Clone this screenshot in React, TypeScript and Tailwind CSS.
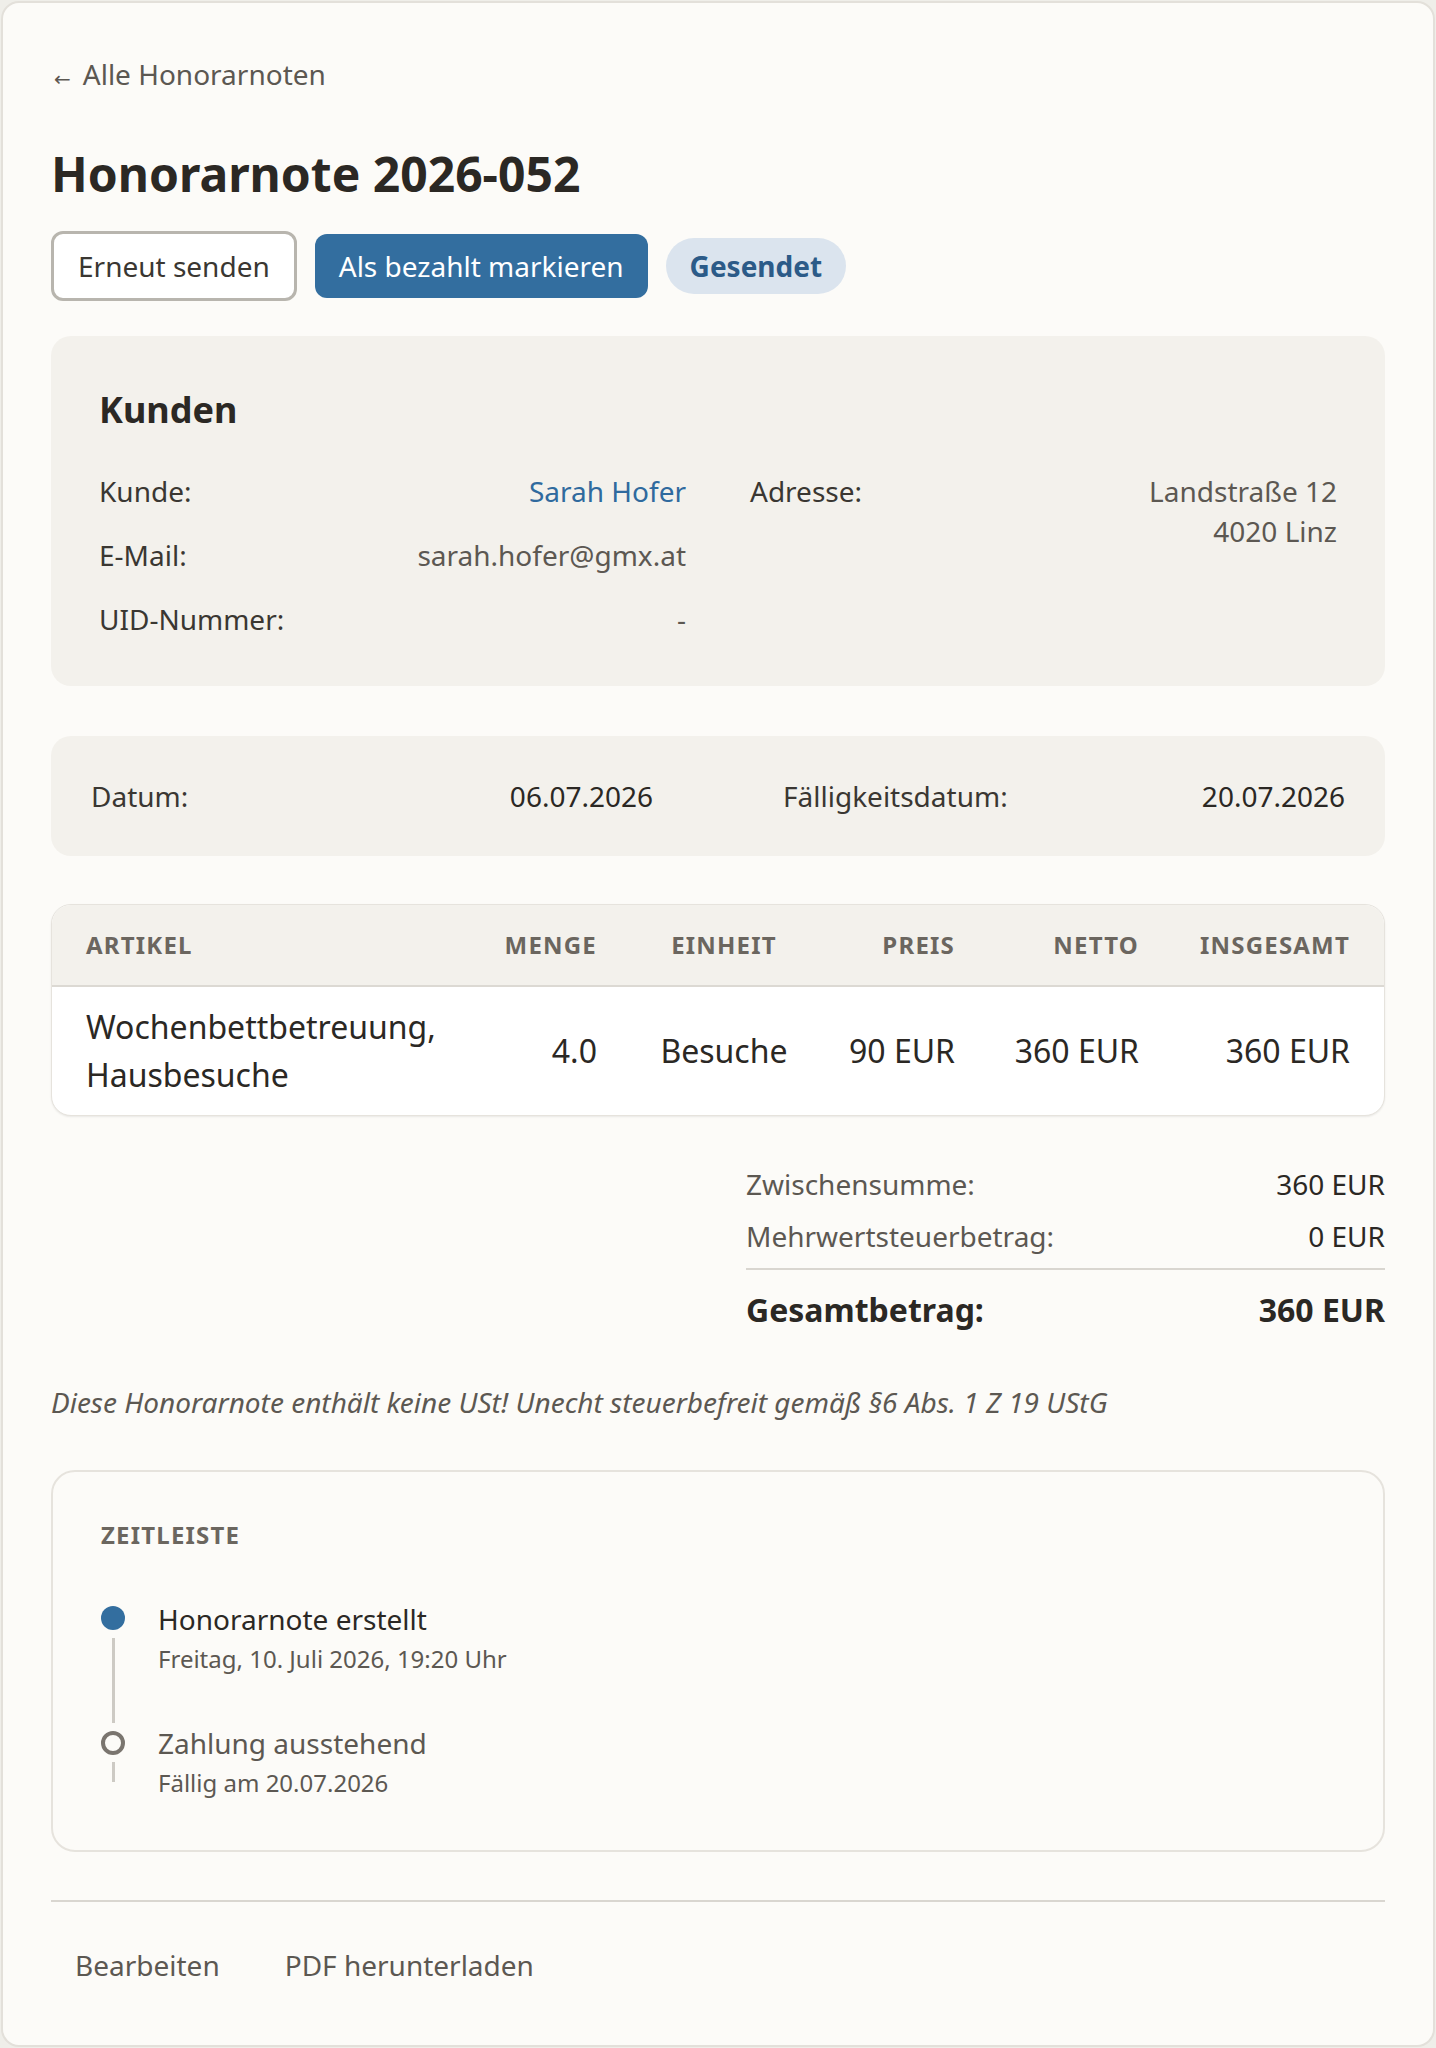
const rowLabel = "text-[#3a3732]";
const rowValue = "text-[#5c5852]";

function InfoRow({ label, children }: { label: string; children: React.ReactNode }) {
  return (
    <div className="flex justify-between">
      <span className={rowLabel}>{label}</span>
      <span className="text-right">{children}</span>
    </div>
  );
}

const headCell = "text-[24px] font-bold uppercase tracking-[0.05em] text-[#6b665f] leading-[30px]";

function ItemsTable() {
  return (
    <div className="overflow-hidden rounded-[20px] border border-[#e6e3dd] bg-white shadow-[0_1px_2px_rgba(0,0,0,0.08)]">
      <div className="grid h-[82px] grid-cols-[419px_160px_186px_172px_184px_1fr] items-center border-b-2 border-[#dcd9d3] bg-[#f3f1ec]">
        <span className={`${headCell} pl-[34px]`}>Artikel</span>
        <span className={`${headCell} pr-[34px] text-right`}>Menge</span>
        <span className={`${headCell} text-center`}>Einheit</span>
        <span className={`${headCell} pr-[34px] text-right`}>Preis</span>
        <span className={`${headCell} pr-[34px] text-right`}>Netto</span>
        <span className={`${headCell} pr-[34px] text-right`}>Insgesamt</span>
      </div>
      <div className="grid grid-cols-[419px_160px_186px_172px_184px_1fr] items-center py-[16px] text-[32px] leading-[48px] text-[#2b2824]">
        <span className="pl-[34px]">Wochenbettbetreuung, Hausbesuche</span>
        <span className="pr-[34px] text-right">4.0</span>
        <span className="text-center">Besuche</span>
        <span className="pr-[34px] text-right">90 EUR</span>
        <span className="pr-[34px] text-right">360 EUR</span>
        <span className="pr-[34px] text-right">360 EUR</span>
      </div>
    </div>
  );
}

function Timeline() {
  return (
    <section className="rounded-[24px] border-2 border-[#e6e3dd] bg-[#fcfbf8] px-[48px] pb-[47px] pt-[49px]">
      <h3 className="text-[24px] font-bold uppercase leading-[28px] tracking-[0.05em] text-[#6b665f]">Zeitleiste</h3>
      <div className="mt-[50px] flex flex-col">
        <div className="flex gap-[33px]">
          <div className="flex w-[24px] flex-col items-center">
            <span className="mt-[7px] h-[24px] w-[24px] rounded-full bg-[#336e9f]" />
            <span className="mt-[8px] w-[3px] flex-1 bg-[#cdcac4]" />
          </div>
          <div className="pb-[44px]">
            <p className="text-[28px] leading-[40px] text-[#2b2824]">Honorarnote erstellt</p>
            <p className="text-[24px] leading-[40px] text-[#5c5852]">Freitag, 10. Juli 2026, 19:20 Uhr</p>
          </div>
        </div>
        <div className="flex gap-[33px]">
          <div className="flex w-[24px] flex-col items-center">
            <span className="mt-[8px] h-[24px] w-[24px] rounded-full border-4 border-[#7a756f]" />
            <span className="mt-[7px] h-[20px] w-[3px] bg-[#cdcac4]" />
          </div>
          <div>
            <p className="text-[28px] leading-[40px] text-[#5c5852]">Zahlung ausstehend</p>
            <p className="text-[24px] leading-[40px] text-[#5c5852]">Fällig am 20.07.2026</p>
          </div>
        </div>
      </div>
    </section>
  );
}

export default function App() {
  return (
    <div className="min-h-[2048px] bg-[#efeee9] p-px font-['Noto_Sans',sans-serif]">
      <main className="flex flex-col rounded-[18px] border-2 border-[#e3e0da] bg-[#fcfbf8] px-[48px] pb-[44px] pt-[51px]">
        <a href="#" className="flex items-center text-[28px] leading-[40px] text-[#5c5852]">
          <span className="ml-[3px] mr-[12px] mt-[10px] font-['DejaVu_Sans',sans-serif] text-[20px] leading-none">←</span>
          Alle Honorarnoten
        </a>

        <h1 className="mt-[50px] text-[48px] font-bold leading-[60px] text-[#2b2824]">Honorarnote 2026-052</h1>

        <div className="mt-[27px] flex h-[70px] items-center gap-[18px]">
          <button type="button" className="h-[70px] rounded-[12px] border-[3px] border-[#b8b5ae] bg-white px-6 text-[28px] text-[#3a3732]">
            Erneut senden
          </button>
          <button type="button" className="h-[64px] rounded-[12px] bg-[#336e9f] px-6 text-[28px] text-white">
            Als bezahlt markieren
          </button>
          <span className="flex h-[56px] items-center rounded-full bg-[#dbe4ee] px-6 text-[28px] font-bold text-[#2c5b88]">
            Gesendet
          </span>
        </div>

        <section className="mt-[35px] rounded-[20px] bg-[#f3f1ec] px-[48px] pb-[47px] pt-[48px]">
          <h2 className="text-[36px] font-bold leading-[52px] text-[#2b2824]">Kunden</h2>
          <div className="mt-[35px] grid grid-cols-2 gap-x-[64px] text-[28px] leading-[40px]">
            <div className="flex flex-col gap-6">
              <InfoRow label="Kunde:">
                <a href="#" className="text-[#2f6a9e]">Sarah Hofer</a>
              </InfoRow>
              <InfoRow label="E-Mail:">
                <span className={rowValue}>sarah.hofer@gmx.at</span>
              </InfoRow>
              <InfoRow label="UID-Nummer:">
                <span className={rowValue}>-</span>
              </InfoRow>
            </div>
            <div>
              <InfoRow label="Adresse:">
                <span className={`${rowValue} block`}>Landstraße 12</span>
                <span className={`${rowValue} block`}>4020 Linz</span>
              </InfoRow>
            </div>
          </div>
        </section>

        <section className="mt-[50px] grid grid-cols-2 gap-x-[130px] rounded-[20px] bg-[#f3f1ec] px-[40px] py-[40px] text-[28px] leading-[40px]">
          <div className="flex justify-between">
            <span className={rowLabel}>Datum:</span>
            <span className="text-[#2b2824]">06.07.2026</span>
          </div>
          <div className="flex justify-between">
            <span className={rowLabel}>Fälligkeitsdatum:</span>
            <span className="text-[#2b2824]">20.07.2026</span>
          </div>
        </section>

        <div className="mt-[48px]">
          <ItemsTable />
        </div>

        <div className="ml-auto mt-[48px] flex w-[639px] flex-col">
          <div className="flex justify-between text-[28px] leading-[40px]">
            <span className="text-[#5c5852]">Zwischensumme:</span>
            <span className="text-[#2b2824]">360 EUR</span>
          </div>
          <div className="mt-3 flex justify-between text-[28px] leading-[40px]">
            <span className="text-[#5c5852]">Mehrwertsteuerbetrag:</span>
            <span className="text-[#2b2824]">0 EUR</span>
          </div>
          <div className="mt-3 flex justify-between border-t-2 border-[#d9d6d0] pt-[18px] text-[32px] font-bold leading-[44px] text-[#2b2824]">
            <span>Gesamtbetrag:</span>
            <span>360 EUR</span>
          </div>
        </div>

        <p className="mt-[50px] text-[28px] italic leading-[40px] text-[#5c5852]">
          Diese Honorarnote enthält keine USt! Unecht steuerbefreit gemäß §6 Abs. 1 Z 19 UStG
        </p>

        <div className="mt-[48px]">
          <Timeline />
        </div>

        <div className="mt-[48px] flex gap-[17px] border-t-2 border-[#d9d6d0] pt-[27px]">
          <button type="button" className="rounded-[12px] px-6 py-4 text-[28px] leading-[40px] text-[#5c5852]">
            Bearbeiten
          </button>
          <button type="button" className="rounded-[12px] px-6 py-4 text-[28px] leading-[40px] text-[#5c5852]">
            PDF herunterladen
          </button>
        </div>
      </main>
    </div>
  );
}
